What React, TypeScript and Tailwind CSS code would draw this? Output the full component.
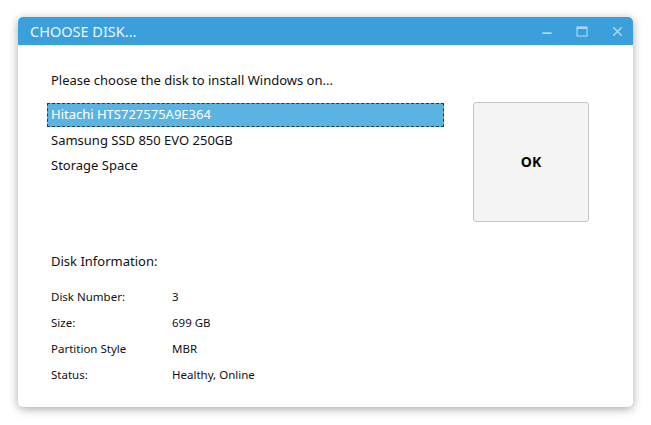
import { Minus, X } from "lucide-react";

const disks = ["Hitachi HTS727575A9E364", "Samsung SSD 850 EVO 250GB", "Storage Space"];

const info = [
  { label: "Disk Number:", value: "3" },
  { label: "Size:", value: "699 GB" },
  { label: "Partition Style", value: "MBR" },
  { label: "Status:", value: "Healthy, Online" },
];

export default function App() {
  return (
    <div className="w-[651px] h-[425px] bg-white pt-[17px] pl-[18px] font-['Noto_Sans',sans-serif]">
      <div className="w-[615px] h-[390px] rounded-[5px] bg-white shadow-[0_2px_10px_rgba(0,0,0,0.35)] overflow-hidden flex flex-col">
        {/* title bar */}
        <div className="h-[28px] bg-[#3a9fdb] flex items-center pl-[12px] pr-[8px]">
          <span className="text-[14.5px] text-[#eaf6fd] pt-[1px] flex-1">CHOOSE DISK...</span>
          <div className="flex items-center gap-[20px] text-[#a6d8f4]">
            <Minus className="w-[14px] h-[14px] mt-[4px]" strokeWidth={3} />
            <svg width="12" height="11" viewBox="0 0 12 11" className="mx-[2px]">
              <rect x="1" y="1" width="10" height="9" fill="none" stroke="currentColor" strokeWidth="1.2" />
              <rect x="1" y="1" width="10" height="2" fill="currentColor" />
            </svg>
            <X className="w-[15px] h-[15px]" strokeWidth={2.5} />
          </div>
        </div>

        {/* body */}
        <div className="flex-1 flex flex-col pl-[29px] pr-[44px]">
          <p className="mt-[26px] pl-[4px] text-[13px] text-[#111]">Please choose the disk to install Windows on...</p>
          <div className="flex mt-[12px]">
            <div className="w-[397px] flex flex-col">
              {disks.map((d, i) => (
                <div
                  key={d}
                  className={
                    i === 0
                      ? "h-[24px] mb-[2px] pl-[3px] flex items-center text-[13px] text-white bg-[#5bb3e2] border border-dashed border-[#1a3d5c]"
                      : "h-[25px] pl-[4px] flex items-center text-[13px] text-[#111]"
                  }
                >
                  {d}
                </div>
              ))}
            </div>
            <div className="ml-[29px] -mt-[1px] w-[116px] h-[120px] rounded-[3px] bg-[#f4f4f4] border border-[#c6c6c6] flex items-center justify-center">
              <span className="text-[14px] font-bold text-black">OK</span>
            </div>
          </div>
          <p className="mt-[30px] pl-[4px] text-[13px] text-[#111]">Disk Information:</p>
          <div className="mt-[13px] pl-[4px] flex flex-col">
            {info.map((r) => (
              <div key={r.label} className="h-[26px] flex items-center text-[11.5px] text-[#111]">
                <span className="w-[121px]">{r.label}</span>
                <span>{r.value}</span>
              </div>
            ))}
          </div>
        </div>
      </div>
    </div>
  );
}
